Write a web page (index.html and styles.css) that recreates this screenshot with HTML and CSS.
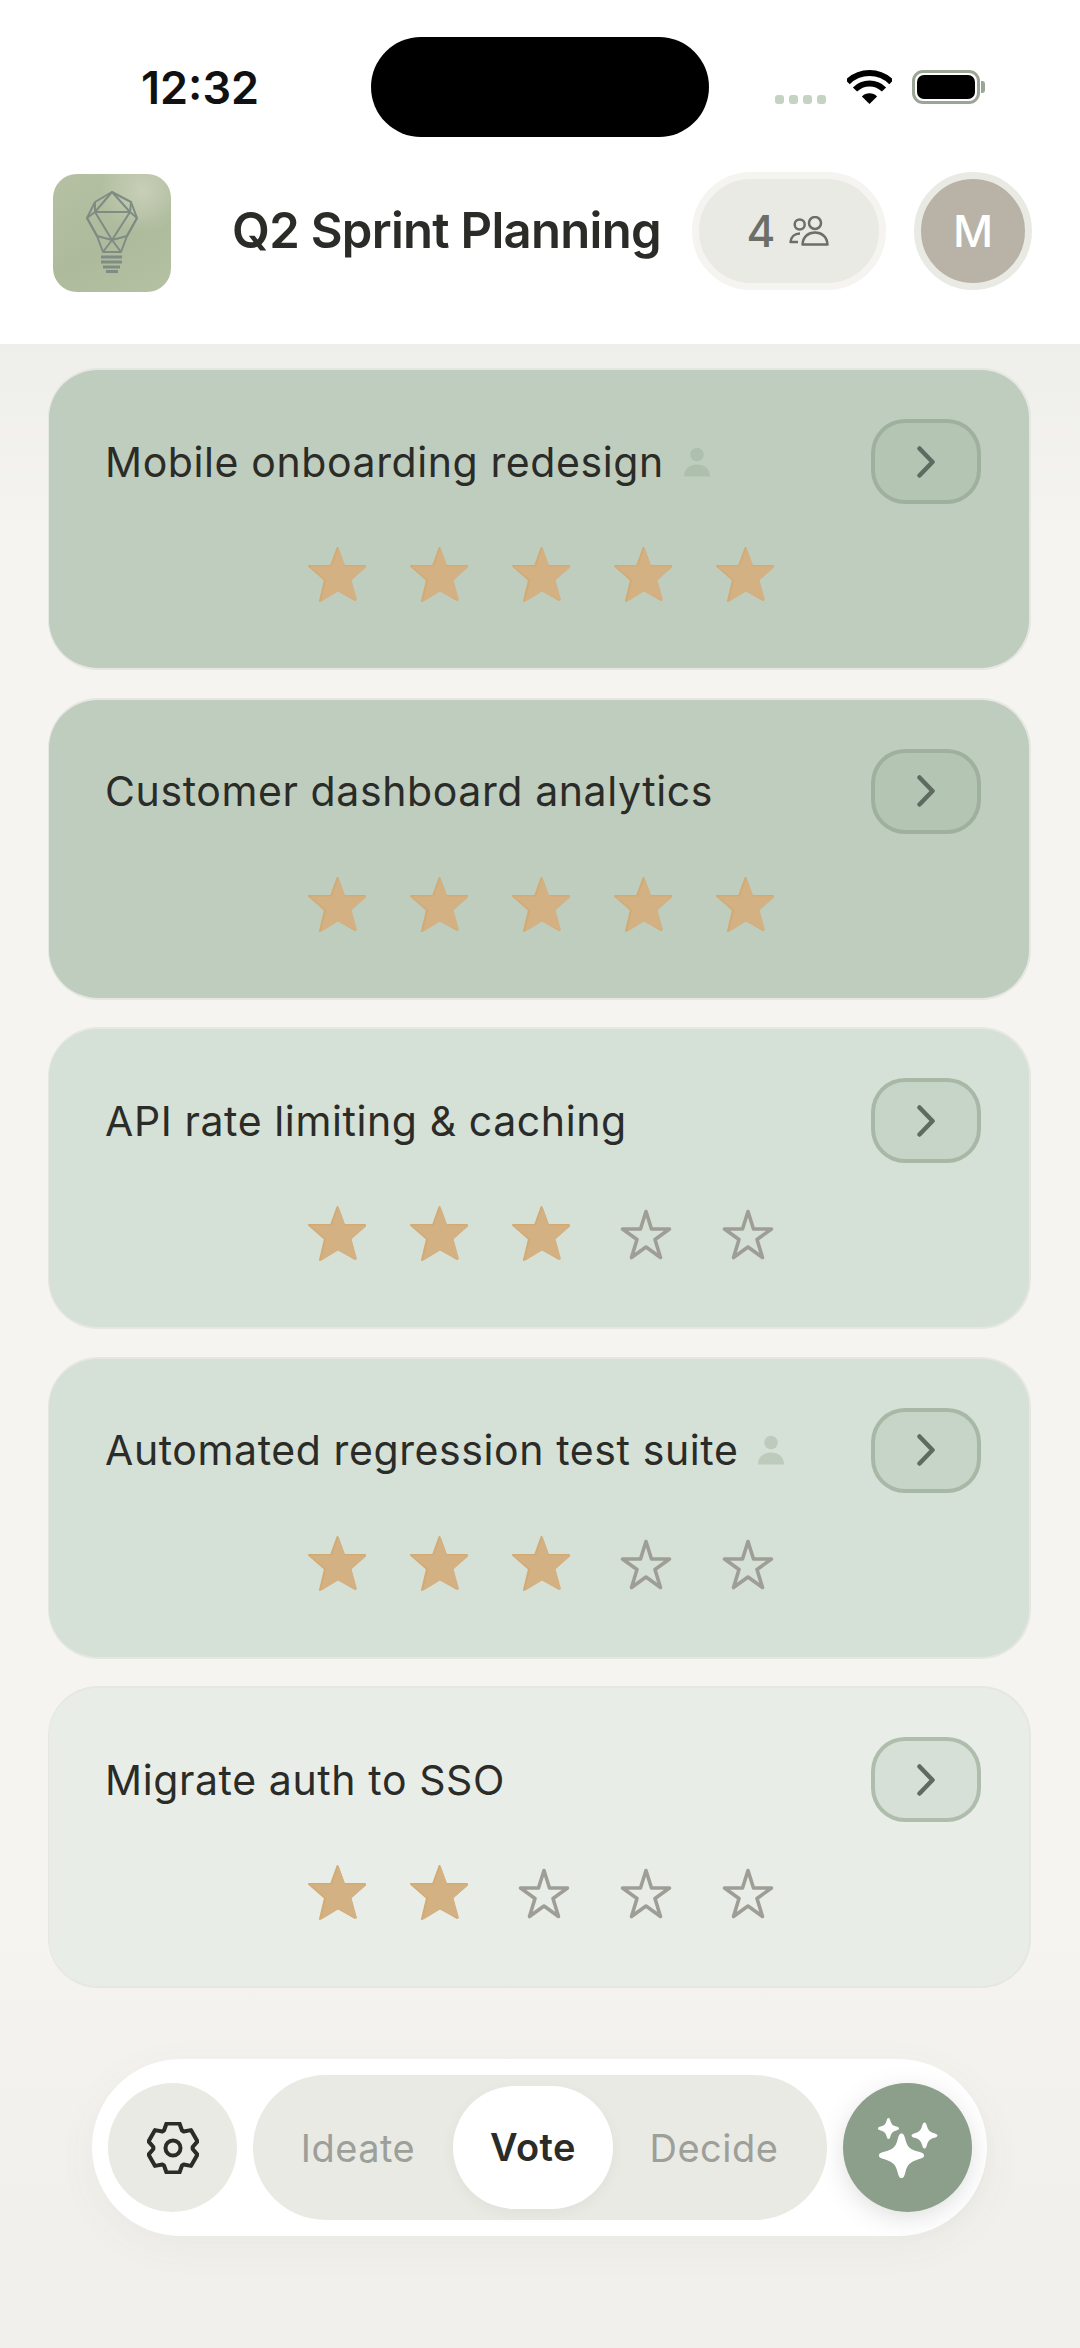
FILE: index.html
```html
<!DOCTYPE html>
<html lang="en">
<head>
    <meta charset="UTF-8">
    <meta name="viewport" content="width=device-width, initial-scale=1.0">
    <title>Q2 Sprint Planning</title>
    <link rel="stylesheet" href="styles.css">
</head>
<body>
    <svg class="defs" width="0" height="0">
        <symbol id="star-on" viewBox="0 0 60 60">
            <polygon class="star-edge" points="29.500,2 36,20 57,20 42,34 47,54 29.500,44 12,55 17,34 1,20 23,20"/>
            <polygon class="star-face" points="30.500,3 37,21 58,21 43,34 48.500,54 30,45 13.500,55 18.500,34 3,21 24,21"/>
        </symbol>
        <symbol id="star-off" viewBox="0 0 60 60">
            <polygon class="star-line" points="32,6.500 37.500,24 55.500,24 41,34.500 46.500,52.500 32,42 17.500,52.500 23,34.500 8.500,24 26.500,24"/>
        </symbol>
        <symbol id="chevron" viewBox="0 0 18 32">
            <polyline class="chevron-line" points="2.500,2.500 15.500,16 2.500,29.500"/>
        </symbol>
        <symbol id="person" viewBox="0 0 26 30">
            <circle cx="13" cy="7.500" r="6.800"/>
            <path d="M0 29.500c0-8 6-12 13-12s13 4 13 12z"/>
        </symbol>
    </svg>

    <header class="top">
        <div class="status">
            <span class="time">12:32</span>
            <div class="island"></div>
            <div class="status-icons">
                <div class="dots"><i></i><i></i><i></i><i></i></div>
                <svg class="wifi" width="45" height="34" viewBox="0 0 45 34">
                    <path class="wifi-arc" d="M.6 12.100a31 31 0 0 1 43.800 0"/>
                    <path class="wifi-arc" d="M8 19.500a20.500 20.500 0 0 1 29 0"/>
                    <path d="M22.500 34l-7.600-7.600a10.800 10.800 0 0 1 15.200 0z"/>
                </svg>
                <div class="battery"><div class="battery-fill"></div></div>
                <div class="battery-cap"></div>
            </div>
        </div>
        <div class="title-bar">
            <div class="logo">
                <svg width="118" height="118" viewBox="0 0 118 118">
                    <g class="bulb">
                        <polygon points="59,18 78,28 84,44 74,62 68,78 50,78 44,62 34,44 42,28"/>
                        <polygon points="59,18 77,38 42,38"/>
                        <polygon points="42,38 77,38 59,66"/>
                        <polyline points="42,28 42,38 34,44 44,62 59,66 74,62 84,44 77,38 78,28"/>
                        <polyline points="50,78 59,66 68,78"/>
                    </g>
                    <g class="bulb-base">
                        <line x1="48" y1="83" x2="69" y2="83"/>
                        <line x1="48" y1="88" x2="69" y2="88"/>
                        <line x1="50" y1="93" x2="67" y2="93"/>
                        <line x1="53" y1="97.500" x2="65" y2="97.500"/>
                    </g>
                </svg>
            </div>
            <h1 class="title">Q2 Sprint Planning</h1>
            <div class="members">
                <span>4</span>
                <svg class="people" width="40" height="30" viewBox="0 0 40 30">
                    <circle cx="10.700" cy="8.500" r="5"/>
                    <circle cx="26" cy="7" r="6"/>
                    <path d="M13.500 28.500c.5-8 6-12 12.500-12s12 4 12.500 12z"/>
                    <path d="M9 26H1.500c.5-5 4-8.500 9.500-8.500"/>
                </svg>
            </div>
            <div class="avatar">M</div>
        </div>
    </header>

    <main class="list">
        <section class="card card-high">
            <div class="card-head">
                <p class="card-title">Mobile onboarding redesign</p>
                <svg class="owner"><use href="#person"/></svg>
                <button class="open"><svg class="chev"><use href="#chevron"/></svg></button>
            </div>
            <div class="stars">
                <svg class="star"><use href="#star-on"/></svg>
                <svg class="star"><use href="#star-on"/></svg>
                <svg class="star"><use href="#star-on"/></svg>
                <svg class="star"><use href="#star-on"/></svg>
                <svg class="star"><use href="#star-on"/></svg>
            </div>
        </section>
        <section class="card card-high">
            <div class="card-head">
                <p class="card-title">Customer dashboard analytics</p>
                <button class="open"><svg class="chev"><use href="#chevron"/></svg></button>
            </div>
            <div class="stars">
                <svg class="star"><use href="#star-on"/></svg>
                <svg class="star"><use href="#star-on"/></svg>
                <svg class="star"><use href="#star-on"/></svg>
                <svg class="star"><use href="#star-on"/></svg>
                <svg class="star"><use href="#star-on"/></svg>
            </div>
        </section>
        <section class="card card-mid">
            <div class="card-head">
                <p class="card-title">API rate limiting &amp; caching</p>
                <button class="open"><svg class="chev"><use href="#chevron"/></svg></button>
            </div>
            <div class="stars">
                <svg class="star"><use href="#star-on"/></svg>
                <svg class="star"><use href="#star-on"/></svg>
                <svg class="star"><use href="#star-on"/></svg>
                <svg class="star"><use href="#star-off"/></svg>
                <svg class="star"><use href="#star-off"/></svg>
            </div>
        </section>
        <section class="card card-mid">
            <div class="card-head">
                <p class="card-title">Automated regression test suite</p>
                <svg class="owner"><use href="#person"/></svg>
                <button class="open"><svg class="chev"><use href="#chevron"/></svg></button>
            </div>
            <div class="stars">
                <svg class="star"><use href="#star-on"/></svg>
                <svg class="star"><use href="#star-on"/></svg>
                <svg class="star"><use href="#star-on"/></svg>
                <svg class="star"><use href="#star-off"/></svg>
                <svg class="star"><use href="#star-off"/></svg>
            </div>
        </section>
        <section class="card card-low">
            <div class="card-head">
                <p class="card-title">Migrate auth to SSO</p>
                <button class="open"><svg class="chev"><use href="#chevron"/></svg></button>
            </div>
            <div class="stars">
                <svg class="star"><use href="#star-on"/></svg>
                <svg class="star"><use href="#star-on"/></svg>
                <svg class="star"><use href="#star-off"/></svg>
                <svg class="star"><use href="#star-off"/></svg>
                <svg class="star"><use href="#star-off"/></svg>
            </div>
        </section>
    </main>

    <nav class="dock">
        <button class="settings">
            <svg width="52" height="52" viewBox="0 0 52 52">
                <polygon class="gear" points="17,8.500 19.500,1.500 32.500,1.500 35,8.500 36.660,9.460 43.970,8.120 50.470,19.380 45.660,25.040 45.660,26.960 50.470,32.620 43.970,43.880 36.660,42.540 35,43.500 32.500,50.500 19.500,50.500 17,43.500 15.340,42.540 8.030,43.880 1.530,32.620 6.340,26.960 6.340,25.040 1.530,19.380 8.030,8.120 15.340,9.460"/>
                <circle class="gear" cx="26" cy="26" r="7.500"/>
            </svg>
        </button>
        <div class="phases">
            <span class="phase phase-first">Ideate</span>
            <span class="phase phase-active">Vote</span>
            <span class="phase phase-last">Decide</span>
        </div>
        <button class="magic">
            <svg width="66" height="66" viewBox="0 0 66 66">
                <path transform="translate(26.500 40.500) scale(1.130) translate(-33 -36.500)" d="M33 17c2 0 2.500 2 3.500 5.500 1.500 6 4 8.500 11 10.500 3 .8 5.500 1.500 5.500 3.500s-2.500 2.500-5.500 3.500c-7 2-9.500 5-11 11-1 3.500-1.500 5.500-3.500 5.500s-2.500-2-3.500-5.500c-1.500-6-4-9-11-11-3-1-5.500-1.500-5.500-3.500s2.500-2.700 5.500-3.500c7-2 9.500-4.500 11-10.500 1-3.500 1.500-5.500 3.500-5.500z"/>
                <path transform="translate(13.500 13.500) scale(1.050) translate(-20 -10)" d="M20 0c1 0 1.400 1 1.900 2.800.8 3 2.200 4.500 5.600 5.400 1.500.4 2.500.8 2.500 1.800s-1 1.400-2.500 1.800c-3.400.9-4.800 2.400-5.600 5.400-.5 1.800-.9 2.800-1.900 2.800s-1.400-1-1.900-2.800c-.8-3-2.200-4.500-5.600-5.400-1.500-.4-2.500-.8-2.500-1.800s1-1.400 2.500-1.800c3.400-.9 4.800-2.400 5.600-5.400.5-1.800.9-2.800 1.900-2.800z"/>
                <path transform="translate(49.500 20.500) scale(1.080) translate(-56 -15)" d="M56 3c1.200 0 1.700 1.300 2.300 3.400 1 3.600 2.700 5.400 6.700 6.500 1.700.5 3 1 3 2.100s-1.300 1.700-3 2.100c-4 1.100-5.700 2.900-6.700 6.500-.6 2.100-1.100 3.400-2.300 3.400s-1.700-1.300-2.300-3.400c-1-3.600-2.700-5.400-6.700-6.500-1.700-.4-3-1-3-2.100s1.300-1.600 3-2.100c4-1.100 5.700-2.900 6.700-6.500.6-2.100 1.100-3.400 2.300-3.400z"/>
            </svg>
        </button>
    </nav>
</body>
</html>
```

FILE: styles.css
```css
* {
    margin: 0;
    padding: 0;
    box-sizing: border-box;
}
body {
    width: 1080px;
    height: 2348px;
    overflow: hidden;
    background: linear-gradient(#eeeeea 344px, #f5f4f0 540px, #f5f4f0 1900px, #f1f0ec 2200px);
    font-family: "Inter", "Liberation Sans", sans-serif;
    color: #2b2b28;
}
button {
    border: none;
    font: inherit;
}
.defs {
    display: block;
}

/* top area */
.top {
    height: 344px;
    background: #fff;
}
.status {
    display: flex;
    height: 137px;
    padding: 37px 0 0 141px;
}
.time {
    width: 230px;
    height: 100px;
    line-height: 102px;
    font-size: 45px;
    font-weight: 600;
    color: #111;
}
.island {
    width: 338px;
    height: 100px;
    background: #000;
    border-radius: 50px;
}
.status-icons {
    display: flex;
    align-items: flex-end;
    height: 34px;
    margin: 33px 0 0 66px;
}
.dots {
    display: flex;
    gap: 5px;
    width: 52px;
    margin-right: 20px;
}
.dots i {
    width: 9px;
    height: 9px;
    background: #c5d3c5;
    border-radius: 3px;
}
.wifi {
    margin-right: 20px;
}
.wifi-arc {
    fill: none;
    stroke: #000;
    stroke-width: 6;
}
.battery {
    width: 68px;
    height: 34px;
    padding: 2px;
    border: 3px solid #9aa596;
    border-radius: 11px;
}
.battery-fill {
    height: 100%;
    background: #000;
    border-radius: 7px;
}
.battery-cap {
    width: 4px;
    height: 12px;
    margin: 0 0 11px 1px;
    background: #9aa596;
    border-radius: 0 3px 3px 0;
}
.title-bar {
    display: flex;
    align-items: flex-start;
    height: 120px;
    margin-top: 35px;
    padding: 0 48px 0 53px;
}
.logo {
    width: 118px;
    height: 118px;
    margin-top: 2px;
    border-radius: 24px;
    overflow: hidden;
    background:
        radial-gradient(circle at 76% 14%, #c8d0b8 0, rgba(200, 208, 184, 0) 32%),
        linear-gradient(150deg, #b6c1a4, #adba9b 55%, #b6c1a4);
}
.bulb {
    fill: none;
    stroke: #7f8c84;
    stroke-width: 2;
    stroke-linejoin: round;
}
.bulb-base {
    stroke: #7f8c84;
    stroke-width: 3;
}
.title {
    margin-left: 61px;
    line-height: 118px;
    font-size: 49px;
    font-weight: 600;
    letter-spacing: -0.7px;
    white-space: nowrap;
}
.members {
    display: flex;
    align-items: center;
    justify-content: center;
    gap: 14px;
    width: 194px;
    height: 118px;
    margin-left: auto;
    padding-right: 2px;
    background: #eaeae5;
    border: 7px solid #f5f4f0;
    border-radius: 59px;
    font-size: 44px;
    font-weight: 500;
    color: #6b6f68;
}
.people {
    fill: none;
    stroke: #6b6f68;
    stroke-width: 2.5;
    stroke-linejoin: round;
}
.avatar {
    width: 118px;
    height: 118px;
    margin-left: 28px;
    line-height: 104px;
    text-align: center;
    background: #b8b2a7;
    border: 7px solid #eaeae5;
    border-radius: 50%;
    font-size: 44px;
    font-weight: 500;
    color: #fff;
}

/* idea cards */
.list {
    display: flex;
    flex-direction: column;
    gap: 27.500px;
    padding: 24px 49px 0 48px;
}
.card {
    height: 302px;
    padding: 49px 48px 0 56px;
    border: 2px solid #e6e7e1;
    border-left-width: 1px;
    border-radius: 50px;
}
.card-high {
    background: #bfcdbe;
}
.card-mid {
    background: #d5e0d6;
}
.card-low {
    background: #e8eee7;
}
.card-head {
    display: flex;
    align-items: center;
    height: 85px;
}
.card-title {
    font-size: 41px;
    letter-spacing: 0.6px;
    white-space: nowrap;
}
.owner {
    width: 26px;
    height: 30px;
    margin-left: 20px;
    fill: #afbfae;
}
.card-mid .owner {
    fill: #bccbbc;
}
.open {
    display: flex;
    align-items: center;
    justify-content: center;
    width: 110px;
    height: 85px;
    margin-left: auto;
    background: rgba(140, 159, 139, 0.18);
    border: 4px solid rgba(140, 159, 139, 0.55);
    border-radius: 34px;
}
.chev {
    width: 18px;
    height: 32px;
}
.chevron-line {
    fill: none;
    stroke: #5f6b60;
    stroke-width: 4.500;
    stroke-linecap: round;
    stroke-linejoin: round;
}
.stars {
    display: flex;
    justify-content: center;
    gap: 42px;
    margin-top: 42px;
    margin-left: -3px;
}
.star {
    width: 60px;
    height: 60px;
}
.star-edge {
    fill: #d2aa72;
    stroke: #d2aa72;
    stroke-width: 2;
    stroke-linejoin: round;
}
.star-face {
    fill: #d4b183;
    stroke: #d4b183;
    stroke-width: 1;
    stroke-linejoin: round;
}
.star-line {
    fill: none;
    stroke: #9e9e97;
    stroke-width: 3.600;
    stroke-linejoin: round;
}

/* bottom dock */
.dock {
    display: flex;
    align-items: center;
    gap: 16px;
    width: 895px;
    height: 177px;
    margin: 71px 0 0 92px;
    padding: 0 15px 0 16px;
    background: #fff;
    border-radius: 89px;
    box-shadow: 0 10px 40px rgba(90, 90, 80, 0.05);
}
.settings {
    display: flex;
    align-items: center;
    justify-content: center;
    width: 129px;
    height: 129px;
    background: #eaeae5;
    border-radius: 50%;
}
.gear {
    fill: none;
    stroke: #2b2b28;
    stroke-width: 4;
    stroke-linejoin: round;
}
.phases {
    display: flex;
    align-items: center;
    width: 574px;
    height: 145px;
    background: #eaeae5;
    border-radius: 73px;
}
.phase {
    font-size: 38px;
    letter-spacing: 0.5px;
    color: #9d9f99;
    text-align: center;
}
.phase-first {
    width: 200px;
    padding-left: 10px;
}
.phase-last {
    width: 214px;
    padding-right: 12px;
}
.phase-active {
    width: 160px;
    height: 123px;
    line-height: 123px;
    background: #fff;
    border-radius: 62px;
    font-weight: 600;
    color: #2b2b28;
    box-shadow: 0 4px 14px rgba(90, 90, 80, 0.06);
}
.magic {
    display: flex;
    align-items: center;
    justify-content: center;
    width: 129px;
    height: 129px;
    background: #8c9f8b;
    border-radius: 50%;
    box-shadow: 0 6px 24px rgba(90, 105, 88, 0.2);
}
.magic svg {
    fill: #fff;
}
```
